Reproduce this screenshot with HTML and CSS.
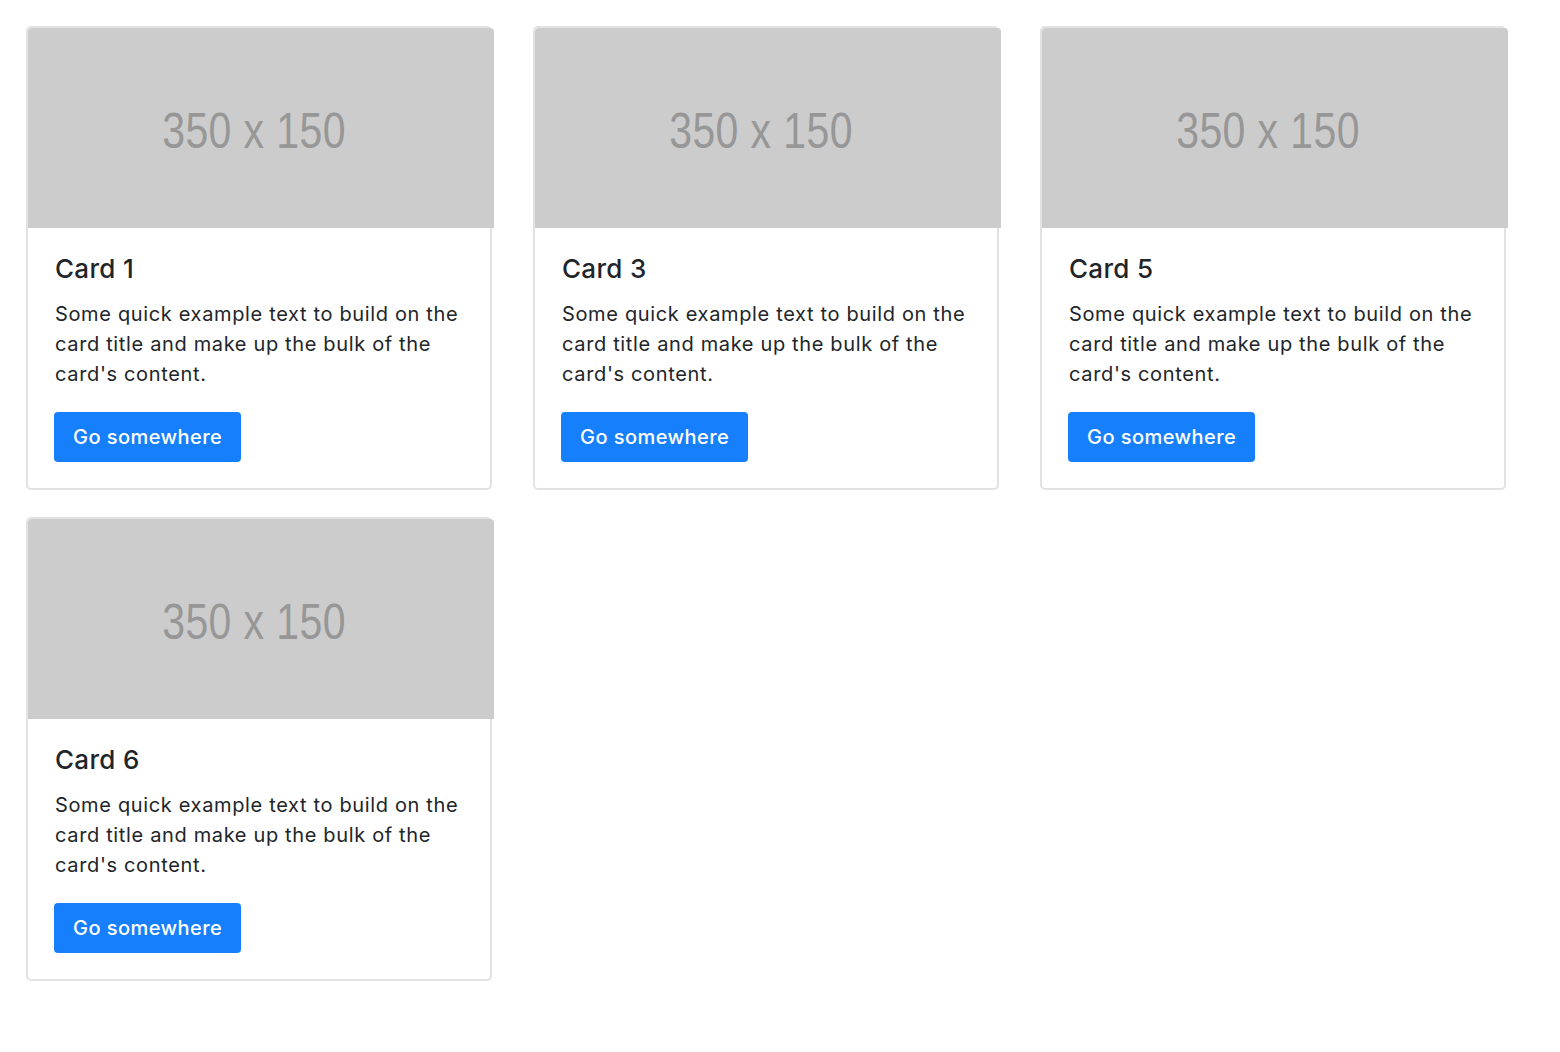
FILE: index.html
```html
<!DOCTYPE html>
<html>
<head>
<meta charset="utf-8">
<link rel="stylesheet" href="styles.css">
</head>
<body>
<div class="grid">
  <div class="card">
    <div class="ph"><span>350 x 150</span></div>
    <div class="body">
      <h5 class="title">Card 1</h5>
      <p class="text">Some quick example text to build on the card title and make up the bulk of the card's content.</p>
      <a class="btn" href="#">Go somewhere</a>
    </div>
  </div>
  <div class="card">
    <div class="ph"><span>350 x 150</span></div>
    <div class="body">
      <h5 class="title">Card 3</h5>
      <p class="text">Some quick example text to build on the card title and make up the bulk of the card's content.</p>
      <a class="btn" href="#">Go somewhere</a>
    </div>
  </div>
  <div class="card">
    <div class="ph"><span>350 x 150</span></div>
    <div class="body">
      <h5 class="title">Card 5</h5>
      <p class="text">Some quick example text to build on the card title and make up the bulk of the card's content.</p>
      <a class="btn" href="#">Go somewhere</a>
    </div>
  </div>
  <div class="card">
    <div class="ph"><span>350 x 150</span></div>
    <div class="body">
      <h5 class="title">Card 6</h5>
      <p class="text">Some quick example text to build on the card title and make up the bulk of the card's content.</p>
      <a class="btn" href="#">Go somewhere</a>
    </div>
  </div>
</div>
</body>
</html>
```

FILE: styles.css
```css
html, body {
  margin: 0;
  padding: 0;
  background: #fff;
}
body {
  font-family: Inter, "Liberation Sans", Arial, sans-serif;
  color: #212529;
}
.grid {
  display: flex;
  flex-wrap: wrap;
  padding: 26px 0 0 26px;
  column-gap: 41px;
  row-gap: 27px;
  width: 1520px;
}
.card {
  width: 462px;
  border: 2px solid #e2e2e2;
  border-radius: 5px;
  display: flex;
  flex-direction: column;
}
.ph {
  width: 466px;
  height: 200px;
  background: #cccccc;
  display: flex;
  align-items: center;
  justify-content: center;
  border-radius: 4px 4px 0 0;
}
.ph span {
  font-family: "Liberation Sans", Arial, sans-serif;
  font-size: 50px;
  color: #979797;
  letter-spacing: 0.5px;
  transform: scaleX(0.82);
  margin-top: 6px;
  margin-right: 13px;
}
.body {
  padding: 26px 25px 26px 27px;
}
.title {
  margin: 0 0 15px 0;
  font-size: 26px;
  font-weight: 500;
  line-height: 30px;
  letter-spacing: 0.3px;
}
.text {
  margin: 0 0 23px 0;
  font-size: 20px;
  line-height: 30px;
  letter-spacing: 0.65px;
}
.btn {
  display: inline-block;
  background: #167ffc;
  color: #fff;
  text-decoration: none;
  font-size: 20px;
  font-weight: 500;
  line-height: 30px;
  letter-spacing: 0.45px;
  padding: 10px 19px;
  border-radius: 4px;
  margin-left: -1px;
}
```
